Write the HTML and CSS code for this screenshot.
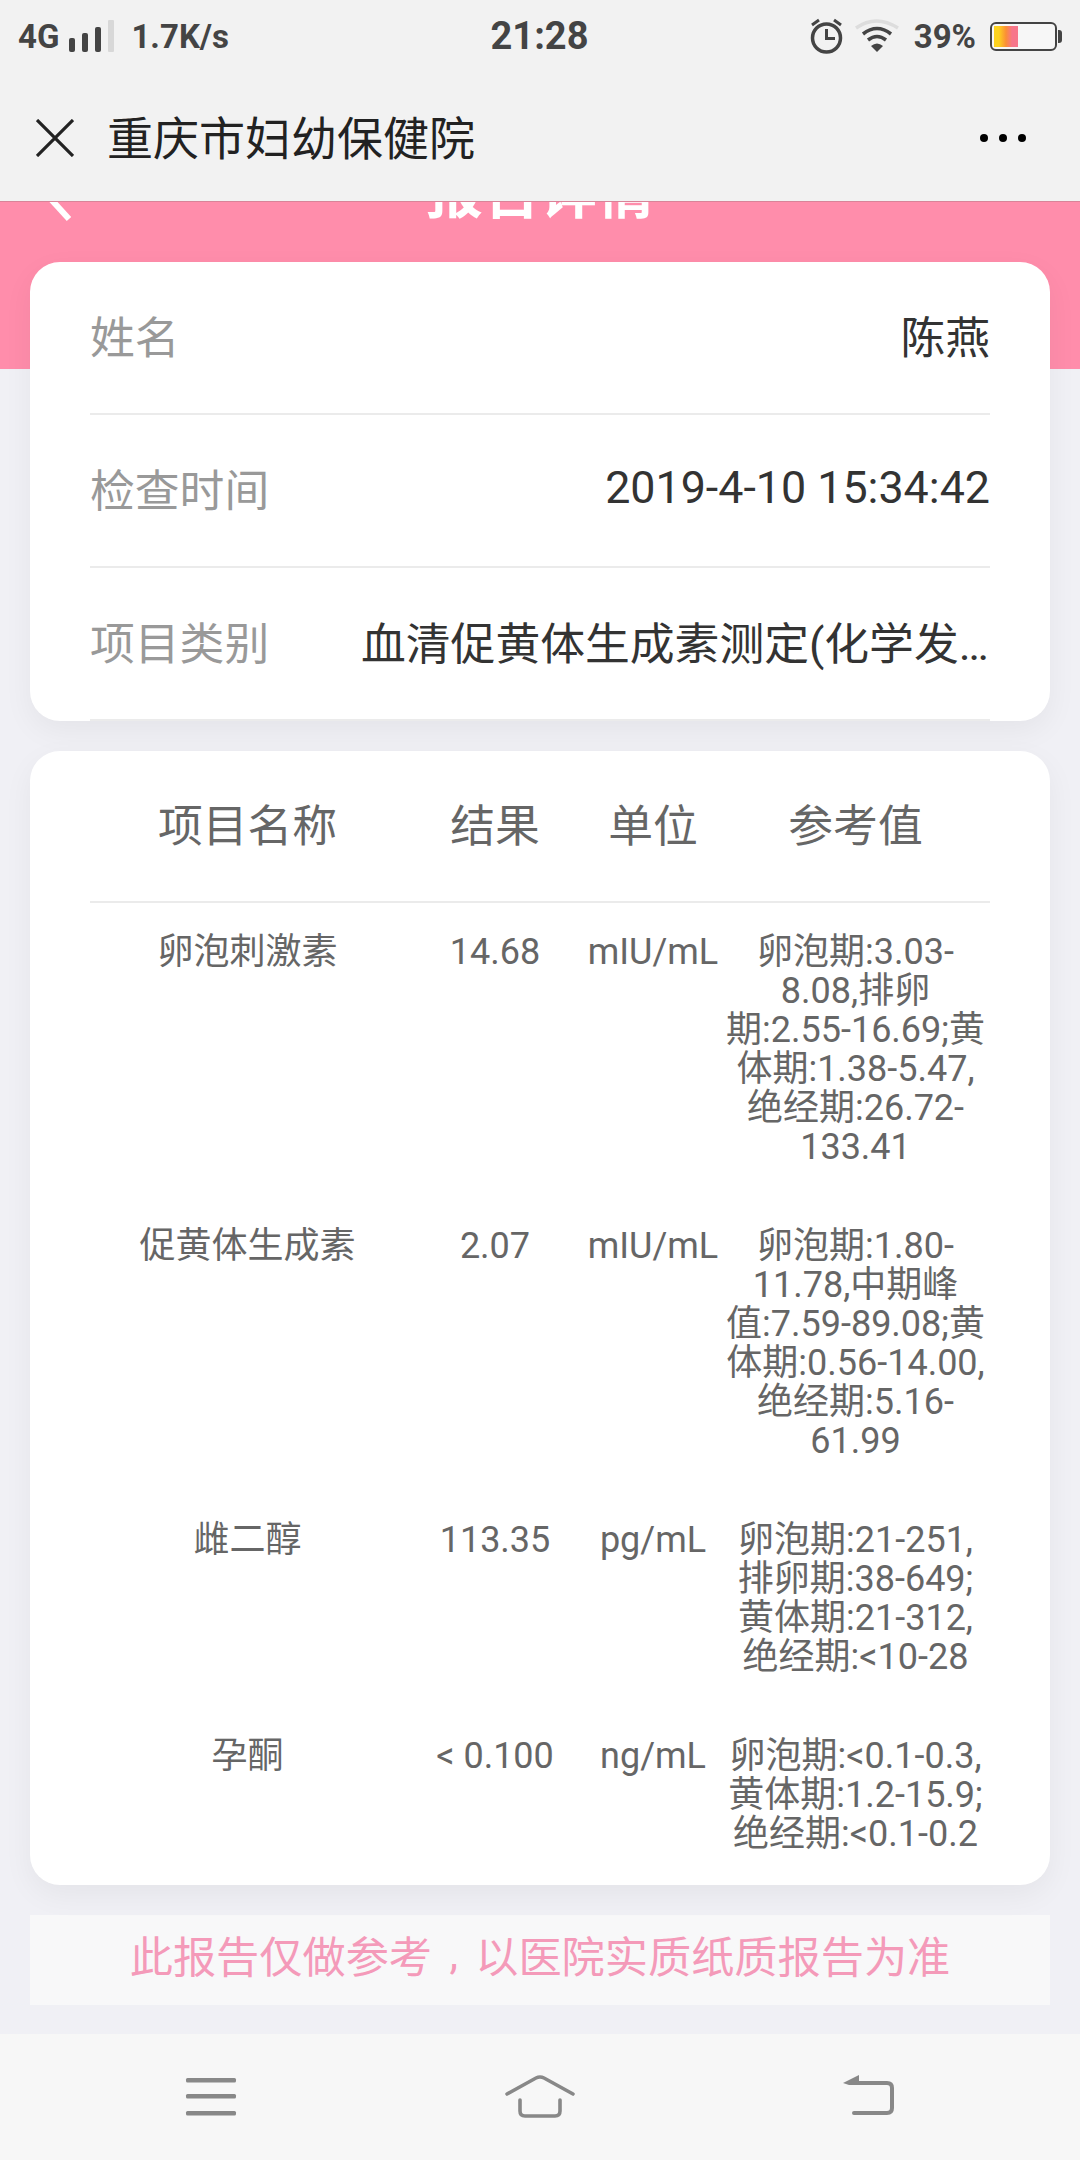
FILE: index.html
```html
<!DOCTYPE html>
<html lang="zh-CN">
<head>
    <meta charset="UTF-8">
    <meta name="viewport" content="width=device-width, initial-scale=1.0">
    <title>重庆市妇幼保健院</title>
    <link rel="stylesheet" href="styles.css">
</head>
<body>
    <div class="status-bar">
        <div class="status-left">
            <span>4G</span>
            <svg class="signal" width="46" height="33" viewBox="0 0 46 33">
                <rect x="0" y="18" width="6" height="14" rx="2" fill="#444"/>
                <rect x="13" y="13" width="6" height="19" rx="2" fill="#444"/>
                <rect x="26" y="7" width="6" height="25" rx="2" fill="#444"/>
                <rect x="39" y="0" width="6" height="32" rx="1" fill="#d8d8d8"/>
            </svg>
            <span class="speed">1.7K/s</span>
        </div>
        <div class="status-time">21:28</div>
        <div class="status-right">
            <svg width="36" height="36" viewBox="0 0 36 36" fill="none" stroke="#444">
                <circle cx="17.5" cy="20" r="14" stroke-width="3.5"/>
                <path d="M17.5 11v9.5h8.5" stroke-width="3"/>
                <path d="M3 7l7-5M32 7l-7-5" stroke-width="3"/>
            </svg>
            <svg class="wifi" width="46" height="34" viewBox="0 0 46 34" fill="none">
                <path d="M2 9Q22 -5 44 9" stroke="#ddd" stroke-width="3.5"/>
                <path d="M9 15Q23 4 37 15" stroke="#444" stroke-width="3.5"/>
                <path d="M14 21Q23 14 32 21" stroke="#444" stroke-width="3.5"/>
                <path d="M17 27Q23 22 29 27L23 33Z" fill="#444"/>
            </svg>
            <span class="percent">39%</span>
            <div class="battery"><div class="battery-fill"></div></div>
        </div>
    </div>

    <header class="title-bar">
        <svg class="close" width="38" height="38" viewBox="0 0 38 38" fill="none" stroke="#222" stroke-width="3.2">
            <path d="M1 1L37 37M37 1L1 37"/>
        </svg>
        <h1>重庆市妇幼保健院</h1>
        <div class="more"><i></i><i></i><i></i></div>
    </header>

    <main>
        <div class="hero">
            <svg class="hero-back" width="30" height="20" viewBox="0 0 30 20" fill="none" stroke="#fff" stroke-width="6">
                <path d="M3 -6L24 17"/>
            </svg>
            <div class="hero-title">报告详情</div>
        </div>

        <section class="card info-card">
            <div class="info-row">
                <span class="info-label">姓名</span>
                <span class="info-value">陈燕</span>
            </div>
            <div class="info-row">
                <span class="info-label">检查时间</span>
                <span class="info-value">2019-4-10 15:34:42</span>
            </div>
            <div class="info-row">
                <span class="info-label">项目类别</span>
                <span class="info-value">血清促黄体生成素测定(化学发光法)</span>
            </div>
        </section>

        <section class="card result-card">
            <table class="results">
                <colgroup>
                    <col class="col-name">
                    <col class="col-result">
                    <col class="col-unit">
                    <col class="col-ref">
                </colgroup>
                <thead>
                    <tr>
                        <th>项目名称</th>
                        <th>结果</th>
                        <th>单位</th>
                        <th>参考值</th>
                    </tr>
                </thead>
                <tbody>
                    <tr>
                        <td>卵泡刺激素</td>
                        <td>14.68</td>
                        <td>mIU/mL</td>
                        <td>卵泡期:3.03-8.08,排卵期:2.55-16.69;黄体期:1.38-5.47,绝经期:26.72-133.41</td>
                    </tr>
                    <tr>
                        <td>促黄体生成素</td>
                        <td>2.07</td>
                        <td>mIU/mL</td>
                        <td>卵泡期:1.80-11.78,中期峰值:7.59-89.08;黄体期:0.56-14.00,绝经期:5.16-61.99</td>
                    </tr>
                    <tr>
                        <td>雌二醇</td>
                        <td>113.35</td>
                        <td>pg/mL</td>
                        <td>卵泡期:21-251,排卵期:38-649;黄体期:21-312,绝经期:&lt;10-28</td>
                    </tr>
                    <tr>
                        <td>孕酮</td>
                        <td>&lt; 0.100</td>
                        <td>ng/mL</td>
                        <td>卵泡期:&lt;0.1-0.3,黄体期:1.2-15.9;绝经期:&lt;0.1-0.2</td>
                    </tr>
                </tbody>
            </table>
        </section>

        <div class="notice">此报告仅做参考<span class="notice-comma">,</span>以医院实质纸质报告为准</div>
    </main>

    <nav class="nav-bar">
        <svg width="52" height="42" viewBox="0 0 52 42" fill="#888">
            <rect x="1" y="3" width="50" height="4.5" rx="1.5"/>
            <rect x="1" y="19" width="50" height="4.5" rx="1.5"/>
            <rect x="1" y="36" width="50" height="4.5" rx="1.5"/>
        </svg>
        <svg width="74" height="46" viewBox="0 0 74 46" fill="none" stroke="#888" stroke-width="3.6" stroke-linecap="round">
            <path d="M4 19L33 3Q37 1 41 3L70 19"/>
            <path d="M17 25V36Q17 41 22 41H52Q57 41 57 36V25"/>
        </svg>
        <svg width="52" height="42" viewBox="0 0 52 42" fill="none" stroke="#888" stroke-width="4" stroke-linecap="round">
            <path d="M14 8H44Q49 8 49 13V33Q49 38 44 38H11"/>
            <path d="M0 8L16 0V10H6Z" fill="#888" stroke="none"/>
        </svg>
    </nav>
</body>
</html>
```

FILE: styles.css
```css
/* General Styles */
* {
    box-sizing: border-box;
}

body {
    font-family: Roboto, "Noto Sans CJK SC", sans-serif;
    margin: 0;
    height: 2160px;
    overflow: hidden;
    display: flex;
    flex-direction: column;
    background-color: #f0f0f5;
    color: #333;
}

/* Status Bar */
.status-bar {
    height: 66px;
    padding: 6px 19px 0 18px;
    display: grid;
    grid-template-columns: 1fr auto 1fr;
    align-items: center;
    background-color: #f2f2f2;
    color: #444;
    font-size: 33px;
    font-weight: 700;
}

.status-left {
    display: flex;
    align-items: center;
}

.signal {
    margin-left: 10px;
}

.speed {
    margin-left: 16px;
}

.status-time {
    font-size: 38px;
}

.status-right {
    display: flex;
    align-items: center;
    justify-content: flex-end;
}

.wifi {
    margin-left: 9px;
}

.percent {
    margin-left: 14px;
}

.battery {
    position: relative;
    width: 67px;
    height: 29px;
    margin-left: 14px;
    margin-right: 4px;
    padding: 2px 2px;
    border: 2.5px solid #444;
    border-radius: 6px;
    background-color: #f7f7f7;
}

.battery::after {
    content: "";
    position: absolute;
    right: -7px;
    top: 6px;
    width: 4px;
    height: 13px;
    background-color: #444;
    border-radius: 0 3px 3px 0;
}

.battery-fill {
    width: 24px;
    height: 100%;
    background: linear-gradient(to right, #fdd21f 20%, #fb8f35 50%, #f7768a 75%);
}

/* Title Bar */
.title-bar {
    height: 136px;
    padding: 8px 54px 0 36px;
    display: flex;
    align-items: center;
    background-color: #f2f2f2;
    border-bottom: 1px solid #d98398;
}

.close {
    flex: none;
}

.title-bar h1 {
    flex: 1;
    margin: 0 0 5px 33px;
    font-size: 46px;
    font-weight: 400;
    color: #222;
}

.more {
    display: flex;
    gap: 11px;
}

.more i {
    width: 8px;
    height: 8px;
    border-radius: 50%;
    background-color: #000;
}

/* Main Content */
main {
    flex: 1;
    min-height: 0;
    padding-bottom: 29px;
}

.hero {
    position: relative;
    height: 167px;
    overflow: hidden;
    background-color: #ff8dab;
}

.hero-back {
    position: absolute;
    left: 45px;
    top: 0;
}

.hero-title {
    position: absolute;
    left: 0;
    right: 0;
    top: -50px;
    text-align: center;
    font-size: 57px;
    line-height: 84px;
    font-weight: 700;
    color: #fff;
}

.card {
    position: relative;
    margin: 0 30px;
    background-color: #fff;
    border-radius: 30px;
    box-shadow: 0 10px 30px rgba(0, 0, 0, 0.05);
}

.info-card {
    height: 459px;
    margin-top: -107px;
    padding: 0 60px;
}

.info-row {
    height: 153px;
    padding-bottom: 6px;
    display: flex;
    align-items: center;
    justify-content: space-between;
    font-size: 44.8px;
    border-bottom: 2px solid #ebebeb;
}

.info-label {
    flex: none;
    color: #999;
}

.info-value {
    max-width: 629px;
    overflow: hidden;
    white-space: nowrap;
    text-overflow: ellipsis;
}

.result-card {
    height: 1134px;
    margin-top: 30px;
    padding: 0 60px;
}

.results {
    width: 100%;
    table-layout: fixed;
    border-collapse: collapse;
    color: #666;
}

.col-name {
    width: 315px;
}

.col-result {
    width: 180px;
}

.col-unit {
    width: 136px;
}

.results th {
    height: 151px;
    padding: 0 0 8px;
    font-size: 44.8px;
    font-weight: 400;
    border-bottom: 2px solid #ebebeb;
}

.results td {
    padding: 30px 0;
    font-size: 36px;
    line-height: 39px;
    text-align: center;
    vertical-align: top;
}

.notice {
    height: 90px;
    margin: 30px 30px 0;
    padding-bottom: 12px;
    display: flex;
    align-items: center;
    justify-content: center;
    background-color: #f8f8f9;
    color: #f49ab9;
    font-size: 43.2px;
}

.notice-comma {
    width: 1em;
    text-align: center;
}

/* Nav Bar */
.nav-bar {
    height: 126px;
    flex: none;
    display: flex;
    align-items: flex-start;
    background-color: #f7f7f7;
    padding: 41px 185px 0;
    justify-content: space-between;
}
```
